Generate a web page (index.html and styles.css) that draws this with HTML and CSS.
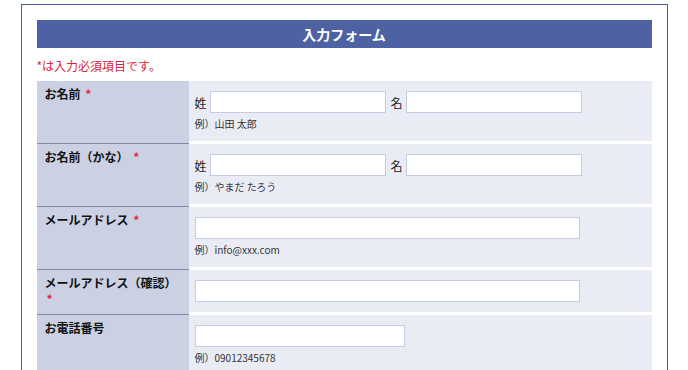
FILE: index.html
```html
<!DOCTYPE html>
<html lang="ja">
<head>
    <meta charset="UTF-8">
    <meta name="viewport" content="width=device-width, initial-scale=1.0">
    <title>入力フォーム</title>
    <link rel="stylesheet" href="styles.css">
</head>
<body>

<!-- Form Container -->
<div class="container">
    <h2 class="form-title">入力フォーム</h2>
    <p class="required-note">*は入力必須項目です。</p>

    <table class="form-table">
        <tr>
            <th>お名前 <span class="req">*</span></th>
            <td>
                <div class="name-fields">
                    <label>姓</label>
                    <input type="text" class="input-name">
                    <label class="second">名</label>
                    <input type="text" class="input-name">
                </div>
                <p class="example">例）山田 太郎</p>
            </td>
        </tr>
        <tr>
            <th>お名前（かな） <span class="req">*</span></th>
            <td>
                <div class="name-fields">
                    <label>姓</label>
                    <input type="text" class="input-name">
                    <label class="second">名</label>
                    <input type="text" class="input-name">
                </div>
                <p class="example">例）やまだ たろう</p>
            </td>
        </tr>
        <tr>
            <th>メールアドレス <span class="req">*</span></th>
            <td>
                <input type="text" class="input-long">
                <p class="example">例）info@xxx.com</p>
            </td>
        </tr>
        <tr>
            <th>メールアドレス（確認） <span class="req">*</span></th>
            <td>
                <input type="text" class="input-long">
            </td>
        </tr>
        <tr>
            <th>お電話番号</th>
            <td>
                <input type="text" class="input-tel">
                <p class="example">例）09012345678</p>
            </td>
        </tr>
    </table>
</div>

</body>
</html>
```

FILE: styles.css
```css
body {
    margin: 0;
    font-family: "Noto Sans CJK JP", "Liberation Sans", sans-serif;
    font-size: 12px;
    color: #222;
    background-color: #ffffff;
}

/* Main Container */
.container {
    width: 615px;
    margin: 4px auto 0;
    padding: 15px 15px 20px;
    border: 1px solid #4a5fa8;
}

/* Title Bar */
.form-title {
    margin: 0;
    height: 28px;
    line-height: 28px;
    background-color: #4e62a3;
    color: #ffffff;
    font-size: 14px;
    font-weight: bold;
    text-align: center;
}

.required-note {
    margin: 9px 0 6px;
    line-height: 18px;
    color: #d9253e;
}

/* Form Table */
.form-table {
    width: 100%;
    border-collapse: separate;
    border-spacing: 0;
}

.form-table th {
    width: 136px;
    padding: 5px 8px 6px;
    vertical-align: top;
    text-align: left;
    font-weight: bold;
    line-height: 1.35;
    color: #111;
    background-color: #cbd1e3;
    border-bottom: 1px solid #7c8ca5;
}

.form-table td {
    padding: 10px 6px;
    vertical-align: top;
    background-color: #e9ecf5;
    border-bottom: 3px solid #ffffff;
}

.req {
    margin-left: 2px;
    color: #e0283f;
}

/* Inputs */
input[type="text"] {
    display: block;
    height: 22px;
    margin: 0;
    padding: 2px 4px;
    box-sizing: border-box;
    border: 1px solid #c6cde2;
    background-color: #ffffff;
}

.name-fields {
    display: flex;
    align-items: center;
}

.name-fields label {
    margin-right: 3px;
}

.name-fields label.second {
    margin-left: 5px;
}

.input-name {
    width: 176px;
}

.input-long {
    width: 385px;
}

.input-tel {
    width: 210px;
}

.example {
    margin: 4px 0 0;
    font-size: 10px;
    line-height: 14px;
    color: #333;
}
```
